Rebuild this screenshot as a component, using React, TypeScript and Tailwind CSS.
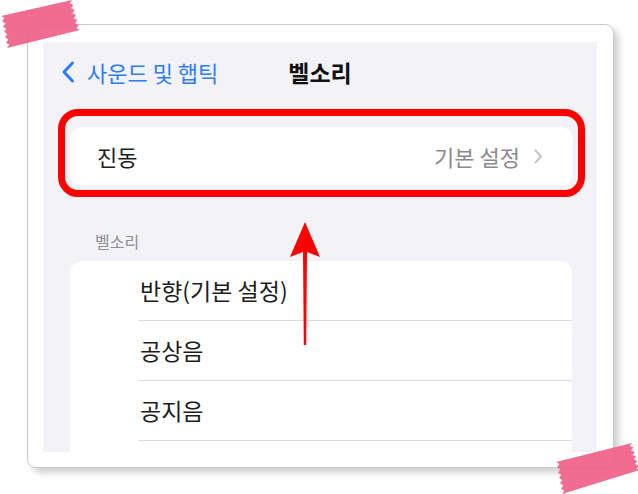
import React from "react";

type Pt = [number, number];

// toothed edge between two points, used for the torn tape ends
function jag(a: Pt, b: Pt, teeth: number, depth: number): Pt[] {
  const out: Pt[] = [];
  const dx = b[0] - a[0];
  const dy = b[1] - a[1];
  const len = Math.hypot(dx, dy);
  const nx = -dy / len;
  const ny = dx / len;
  for (let i = 0; i <= teeth * 2; i++) {
    const t = i / (teeth * 2);
    const d = i % 2 === 1 ? depth : 0;
    out.push([a[0] + dx * t + nx * d, a[1] + dy * t + ny * d]);
  }
  return out;
}

function tape(tl: Pt, tr: Pt, br: Pt, bl: Pt) {
  const pts = [...jag(bl, tl, 6, 3), ...jag(tr, br, 6, 3)];
  return pts.map((p) => `${p[0].toFixed(1)},${p[1].toFixed(1)}`).join(" ");
}

function Tapes() {
  return (
    <svg
      className="absolute left-0 top-0 pointer-events-none"
      width="638"
      height="494"
      viewBox="0 0 638 494"
    >
      <polygon
        points={tape([1, 16], [72, 0], [80, 30], [7, 48])}
        fill="#f0648b"
        fillOpacity="0.95"
      />
      <polygon
        points={tape([556, 462], [632, 443], [640, 470], [562, 494])}
        fill="#f0648b"
        fillOpacity="0.95"
      />
    </svg>
  );
}

function Arrow() {
  return (
    <svg
      className="absolute left-[245px] top-[178px]"
      width="34"
      height="128"
      viewBox="0 0 34 128"
    >
      <polygon points="17,2 32,37 19,32 18.2,125 15.8,125 15,32 2,37" fill="#ff0000" />
    </svg>
  );
}

function ChevronRight() {
  return (
    <svg width="9" height="15" viewBox="0 0 9 15" className="ml-[14px]">
      <path
        d="M1.5 1.5 L7 7.5 L1.5 13.5"
        fill="none"
        stroke="#c4c4c7"
        strokeWidth="2"
        strokeLinecap="round"
        strokeLinejoin="round"
      />
    </svg>
  );
}

function ChevronLeft() {
  return (
    <svg width="14" height="22" viewBox="0 0 14 22">
      <path
        d="M11.5 2 L3 11 L11.5 20"
        fill="none"
        stroke="#2f7cf6"
        strokeWidth="3"
        strokeLinecap="round"
        strokeLinejoin="round"
      />
    </svg>
  );
}

const ringtones = ["반향(기본 설정)", "공상음", "공지음", ""];

export default function App() {
  return (
    <div
      className="relative w-[638px] h-[494px] bg-white overflow-hidden pt-[24px] pl-[27px]"
      style={{ fontFamily: '"Noto Sans CJK KR", "Noto Sans", sans-serif' }}
    >
      <div className="w-[587px] h-[444px] bg-white border border-[#c9c9c9] rounded-[9px] shadow-[5px_5px_6px_rgba(0,0,0,0.18)] pt-[17px] pl-[15px]">
        <div className="relative w-[554px] h-[410px] bg-[#f2f2f7] overflow-hidden">
          {/* nav bar */}
          <div className="relative h-[60px] flex items-center pl-[18px]">
            <ChevronLeft />
            <span className="ml-[12px] text-[22px] text-[#2f7cf6] leading-none">
              사운드 및 햅틱
            </span>
            <span className="absolute left-0 right-0 text-center text-[23px] font-bold text-[#111] leading-none pointer-events-none">
              벨소리
            </span>
          </div>

          {/* 진동 */}
          <div className="mt-[25px] ml-[27px] mr-[24px] h-[59px] bg-white rounded-[12px] flex items-center pl-[27px] pr-[30px]">
            <span className="text-[22px] text-[#1c1c1e]">진동</span>
            <span className="ml-auto text-[22px] text-[#8a8a8e]">기본 설정</span>
            <ChevronRight />
          </div>

          <div className="mt-[45px] ml-[52px] h-[20px] text-[16px] leading-[20px] text-[#8e8e93]">
            벨소리
          </div>

          <div className="mt-[10px] ml-[27px] mr-[25px] bg-white rounded-t-[12px]">
            {ringtones.map((name, i) => (
              <div key={i} className="ml-[68px] h-[60px] border-b border-[#dcdce0] flex items-center pl-[2px]">
                <span className="text-[23px] text-[#1c1c1e]">{name}</span>
              </div>
            ))}
          </div>

          {/* annotation */}
          <div className="absolute left-[15px] top-[67px] w-[527px] h-[88px] border-[7px] border-[#ff0000] rounded-[20px]" />
          <Arrow />
        </div>
      </div>
      <Tapes />
    </div>
  );
}
